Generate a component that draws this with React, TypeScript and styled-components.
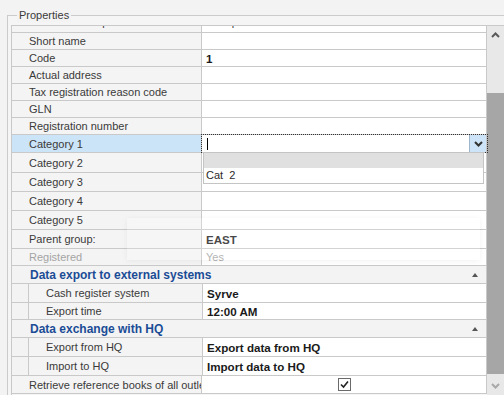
import React from "react"
import styled, { createGlobalStyle } from "styled-components"

const GlobalStyle = createGlobalStyle`
  html, body {
    margin: 0;
    padding: 0;
    background: #f3f3f3;
  }
  body {
    font-family: "Liberation Sans", Arial, sans-serif;
    font-size: 11px;
  }
`

type RowKind = "plain" | "header" | "child"

interface PropRow {
  kind: RowKind
  label: string
  value?: string
  h: number
  bold?: boolean
  disabled?: boolean
  selected?: boolean
  partial?: boolean
  check?: boolean
}

const rows: PropRow[] = [
  { kind: "plain", label: "Numerator template", value: "Not specified", h: 7, partial: true },
  { kind: "plain", label: "Short name", h: 17 },
  { kind: "plain", label: "Code", value: "1", bold: true, h: 17 },
  { kind: "plain", label: "Actual address", h: 17 },
  { kind: "plain", label: "Tax registration reason code", h: 17 },
  { kind: "plain", label: "GLN", h: 17 },
  { kind: "plain", label: "Registration number", h: 17 },
  { kind: "plain", label: "Category 1", h: 18, selected: true },
  { kind: "plain", label: "Category 2", h: 20 },
  { kind: "plain", label: "Category 3", h: 19 },
  { kind: "plain", label: "Category 4", h: 19 },
  { kind: "plain", label: "Category 5", h: 19 },
  { kind: "plain", label: "Parent group:", value: "EAST", bold: true, h: 19 },
  { kind: "plain", label: "Registered", value: "Yes", disabled: true, h: 17 },
  { kind: "header", label: "Data export to external systems", h: 18 },
  { kind: "child", label: "Cash register system", value: "Syrve", bold: true, h: 19 },
  { kind: "child", label: "Export time", value: "12:00 AM", bold: true, h: 17 },
  { kind: "header", label: "Data exchange with HQ", h: 18 },
  { kind: "child", label: "Export from HQ", value: "Export data from HQ", bold: true, h: 19 },
  { kind: "child", label: "Import to HQ", value: "Import data to HQ", bold: true, h: 19 },
  { kind: "plain", label: "Retrieve reference books of all outlets", h: 18, check: true },
]

const Chevron = ({ dir, color }: { dir: "up" | "down"; color: string }) => (
  <svg width="9" height="6" viewBox="0 0 9 6">
    <polyline
      points={dir === "up" ? "1,5 4.5,1.5 8,5" : "1,1 4.5,4.5 8,1"}
      fill="none"
      stroke={color}
      strokeWidth="2"
    />
  </svg>
)

export default function App() {
  const renderRow = (r: PropRow, i: number) => {
    if (r.kind === "header") {
      return (
        <S.Row key={i} $h={r.h}>
          <S.HeaderCell>
            <span>{r.label}</span>
            <S.Collapse />
          </S.HeaderCell>
        </S.Row>
      )
    }
    return (
      <S.Row key={i} $h={r.h} $partial={r.partial}>
        {r.kind === "child" && <S.Indent />}
        <S.LabelCell $child={r.kind === "child"} $selected={r.selected} $disabled={r.disabled}>
          {r.label}
        </S.LabelCell>
        <S.ValueCell $bold={r.bold} $disabled={r.disabled} $editing={r.selected} $center={r.check}>
          {r.value}
          {r.check && (
            <S.CheckBox>
              <svg width="11" height="11" viewBox="0 0 11 11">
                <polyline points="2,5.5 4.5,8 9,2.5" fill="none" stroke="#222" strokeWidth="1.6" />
              </svg>
            </S.CheckBox>
          )}
          {r.selected && (
            <>
              <S.Caret />
              <S.DropButton>
                <Chevron dir="down" color="#333" />
              </S.DropButton>
              <S.Popup>
                <S.PopupItem $active />
                <S.PopupItem>Cat&nbsp;&nbsp;2</S.PopupItem>
              </S.Popup>
            </>
          )}
        </S.ValueCell>
      </S.Row>
    )
  }

  return (
    <>
      <GlobalStyle />
      <S.Page>
        <S.GroupFrame>
          <S.Legend>Properties</S.Legend>
          <S.Grid>
            <S.Rows>{rows.map(renderRow)}</S.Rows>
            <S.ScrollBar>
              <S.ScrollButton $h={17}>
                <Chevron dir="up" color="#5a5a5a" />
              </S.ScrollButton>
              <S.Track>
                <S.Thumb />
              </S.Track>
              <S.ScrollButton $h={18}>
                <Chevron dir="down" color="#a8a8a8" />
              </S.ScrollButton>
            </S.ScrollBar>
          </S.Grid>
        </S.GroupFrame>
        <S.Ghost />
      </S.Page>
    </>
  )
}

const S = {
  Page: styled.div`
    position: relative;
    width: 504px;
    height: 395px;
    overflow: hidden;
    background: #f3f3f3;
    color: #3a3a3a;
  `,
  GroupFrame: styled.div`
    margin: 15px 0 0 7px;
    border-top: 1px solid #cbcbcb;
    border-left: 1px solid #cbcbcb;
    padding: 0 0 0 3px;
    background: #f5f5f5;
    height: 380px;
    box-sizing: border-box;
  `,
  Legend: styled.div`
    display: block;
    width: fit-content;
    margin: -8px 0 0 6px;
    padding: 0 2px;
    height: 14px;
    line-height: 14px;
    background: #f3f3f3;
    color: #3a3a3a;
  `,
  Grid: styled.div`
    display: flex;
    margin-top: 3px;
    border-top: 1px solid #c9c9c9;
    border-left: 1px solid #c9c9c9;
    height: 369px;
  `,
  Rows: styled.div`
    width: 475px;
    display: flex;
    flex-direction: column;
  `,
  Row: styled.div<{ $h: number; $partial?: boolean }>`
    display: flex;
    height: ${(p) => p.$h}px;
    flex: none;
    box-sizing: border-box;
    border-bottom: 1px solid #c9c9c9;
    overflow: ${(p) => (p.$partial ? "hidden" : "visible")};
    align-items: stretch;
    & > div {
      align-items: ${(p) => (p.$partial ? "flex-end" : "center")};
      padding-bottom: ${(p) => (p.$partial ? "4px" : "0")};
    }
  `,
  Indent: styled.div`
    width: 16px;
    flex: none;
    background: #f3f3f3;
    border-right: 1px solid #c9c9c9;
  `,
  LabelCell: styled.div<{ $child?: boolean; $selected?: boolean; $disabled?: boolean }>`
    display: flex;
    width: ${(p) => (p.$child ? 174 : 190)}px;
    flex: none;
    box-sizing: border-box;
    padding-left: 17px;
    border-right: 1px solid #c9c9c9;
    background: ${(p) => (p.$selected ? "#cce4f7" : "#f4f4f4")};
    color: ${(p) => (p.$disabled ? "#a4a4a4" : "#3a3a3a")};
    white-space: nowrap;
    overflow: hidden;
  `,
  ValueCell: styled.div<{ $bold?: boolean; $disabled?: boolean; $editing?: boolean; $center?: boolean }>`
    position: relative;
    display: flex;
    justify-content: ${(p) => (p.$center ? "center" : "flex-start")};
    flex: 1;
    box-sizing: border-box;
    padding-left: 4px;
    padding-right: ${(p) => (p.$center ? "4px" : "0")};
    border-right: 1px solid #c9c9c9;
    background: #ffffff;
    font-weight: ${(p) => (p.$bold ? "bold" : "normal")};
    font-size: ${(p) => (p.$bold ? "11.6px" : "11px")};
    color: ${(p) => (p.$disabled ? "#a4a4a4" : p.$bold ? "#1a1a1a" : "#3a3a3a")};
    white-space: nowrap;
    outline: ${(p) => (p.$editing ? "1px dotted #333" : "none")};
    outline-offset: 0;
  `,
  Caret: styled.div`
    width: 1px;
    height: 12px;
    margin-left: 1px;
    background: #000;
  `,
  DropButton: styled.div`
    position: absolute;
    right: 0;
    top: 0;
    bottom: 0;
    width: 16px;
    display: flex;
    align-items: center;
    justify-content: center;
    background: #cde4f8;
    border-left: 1px solid #9fb5c9;
  `,
  Popup: styled.div`
    position: absolute;
    left: 1px;
    top: 100%;
    width: 281px;
    height: 32px;
    box-sizing: border-box;
    border: 1px solid #c4c4c4;
    background: #fff;
    z-index: 2;
    font-weight: normal;
  `,
  PopupItem: styled.div<{ $active?: boolean }>`
    height: 15px;
    line-height: 15px;
    padding-left: 2px;
    background: ${(p) => (p.$active ? "#e0e0e0" : "#fff")};
    color: #2a2a2a;
  `,
  CheckBox: styled.div`
    width: 13px;
    height: 13px;
    box-sizing: border-box;
    border: 1px solid #6a6a6a;
    background: #fff;
    display: flex;
    align-items: center;
    justify-content: center;
  `,
  HeaderCell: styled.div`
    display: flex;
    align-items: center;
    justify-content: space-between;
    flex: 1;
    padding: 0 8px 0 18px;
    background: #f3f3f3;
    border-right: 1px solid #c9c9c9;
    color: #1b4c96;
    font-weight: bold;
    font-size: 12px;
  `,
  Collapse: styled.div`
    width: 0;
    height: 0;
    border-left: 3.5px solid transparent;
    border-right: 3.5px solid transparent;
    border-bottom: 4px solid #555;
  `,
  ScrollBar: styled.div`
    flex: 1;
    display: flex;
    flex-direction: column;
    background: #e8e8e8;
  `,
  ScrollButton: styled.div<{ $h: number }>`
    height: ${(p) => p.$h}px;
    flex: none;
    display: flex;
    align-items: center;
    justify-content: center;
  `,
  Track: styled.div`
    flex: 1;
    padding-top: 50px;
  `,
  Thumb: styled.div`
    height: 281px;
    background: #a6a6a6;
  `,
  Ghost: styled.div`
    position: absolute;
    left: 127px;
    top: 218px;
    width: 353px;
    height: 42px;
    background: rgba(255, 255, 255, 0.2);
    box-shadow: 0 1px 6px rgba(0, 0, 0, 0.06);
    pointer-events: none;
  `,
}
